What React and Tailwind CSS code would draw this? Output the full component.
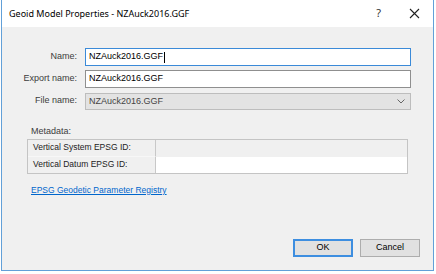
import React from 'react';

const SANS = "font-['Liberation_Sans',Arial,sans-serif]";

const Field = ({ label, children }) => (
  <>
    <label className="text-right text-[9px] text-[#3c3c3c] self-center pr-[1px]">{label}</label>
    {children}
  </>
);

export default function App() {
  return (
    <div className={`w-[436px] h-[274px] bg-white ${SANS}`}>
      <div className="ml-[1px] w-[433px] h-[271px] flex flex-col border-x border-b border-[#62a0d8] bg-[#f0f0f0]">
        {/* Title bar */}
        <div className="h-[27px] flex items-center bg-white pl-[7px] pr-[10px] flex-shrink-0">
          <span className="text-[9px] text-black font-['Noto_Sans',sans-serif]">
            Geoid Model Properties - NZAuck2016.GGF
          </span>
          <span className="ml-auto mr-[28px] text-[11px] text-[#333] font-['Noto_Sans',sans-serif]">?</span>
          <svg width="11" height="11" viewBox="0 0 11 11" className="mr-[3px]">
            <path d="M1 1 L10 10 M10 1 L1 10" stroke="#222" strokeWidth="1.1" />
          </svg>
        </div>

        {/* Body */}
        <div className="flex-1 flex flex-col pt-[21px]">
          <div className="grid grid-cols-[76px_326px] gap-x-[7px] gap-y-[4px]">
            <Field label="Name:">
              <div className="h-[18px] border border-[#3b8ad8] bg-white flex items-center pl-[3px] text-[9px] text-black">
                NZAuck2016.GGF<span className="w-[1px] h-[11px] bg-black ml-[1px]" />
              </div>
            </Field>
            <Field label="Export name:">
              <div className="h-[18px] border border-[#8f8f8f] bg-white flex items-center pl-[3px] text-[9px] text-black">
                NZAuck2016.GGF
              </div>
            </Field>
            <Field label="File name:">
              <div className="mt-[1px] h-[17px] border border-[#bdbdbd] bg-[#e3e3e3] flex items-center pl-[3px] pr-[5px] text-[9px] text-[#444]">
                NZAuck2016.GGF
                <svg width="8" height="5" viewBox="0 0 8 5" className="ml-auto">
                  <path d="M0.5 0.5 L4 4 L7.5 0.5" fill="none" stroke="#666" strokeWidth="1" />
                </svg>
              </div>
            </Field>
          </div>

          {/* Metadata */}
          <div className="pl-[29px] mt-[15px] text-[9px] text-[#3c3c3c]">Metadata:</div>
          <div className="ml-[25px] w-[381px] border border-[#c4c4c4] grid grid-cols-[128px_1fr] text-[8.5px] text-[#222]">
            <div className="h-[17px] flex items-center pl-[5px] border-r border-[#c8c8c8] border-b border-b-[#f7f7f7]">
              Vertical System EPSG ID:
            </div>
            <div className="h-[17px] bg-[#f0f0f0]" />
            <div className="h-[16px] flex items-center pl-[5px] border-r border-[#c8c8c8]">
              Vertical Datum EPSG ID:
            </div>
            <div className="h-[16px] bg-white" />
          </div>

          <div className="pl-[29px] mt-[2px]">
            <span className="text-[8.5px] text-[#0066cc] underline">EPSG Geodetic Parameter Registry</span>
          </div>

          {/* Buttons */}
          <div className="mt-auto mb-[13px] flex justify-end gap-[7px] pr-[13px]">
            <button className="w-[60px] h-[18px] border-2 border-[#3d8ee0] bg-[#e1e1e1] text-[9px] text-black">
              OK
            </button>
            <button className="w-[60px] h-[18px] border border-[#adadad] bg-[#e1e1e1] text-[9px] text-black">
              Cancel
            </button>
          </div>
        </div>
      </div>
    </div>
  );
}
